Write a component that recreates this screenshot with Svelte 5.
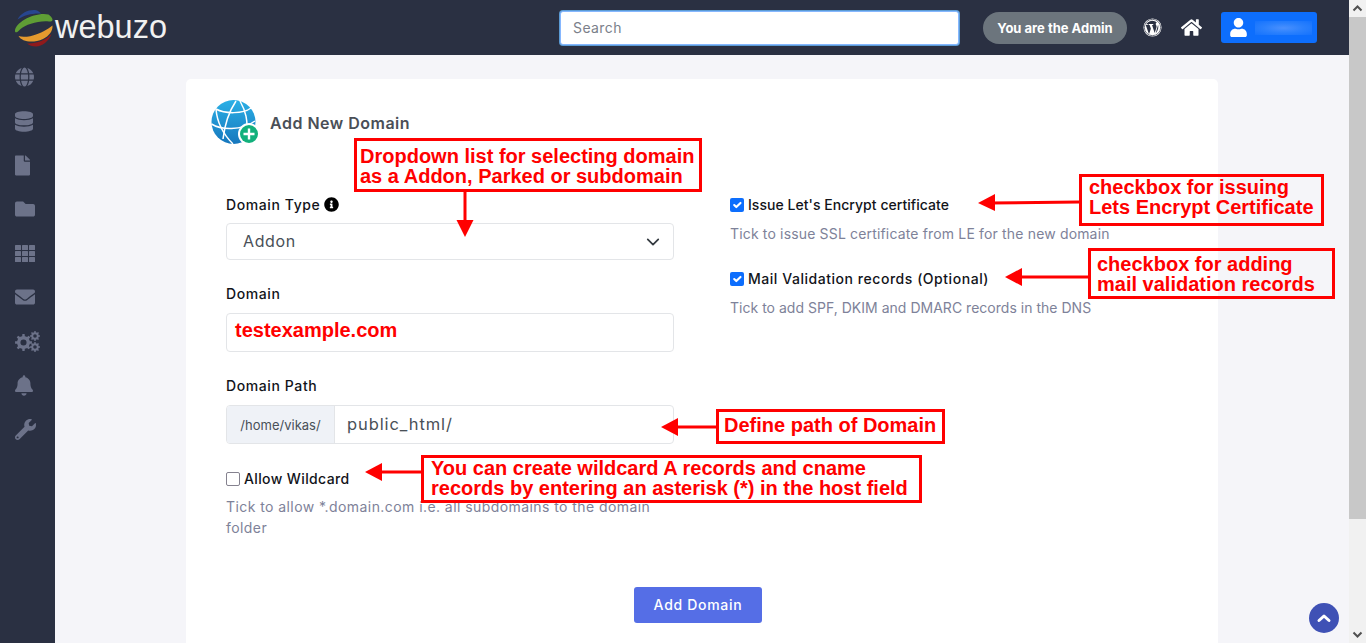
<script>
  // cog outline, used for the three wheels of the settings icon
  function gear(cx, cy, r, teeth) {
    let d = "";
    const step = (Math.PI * 2) / teeth;
    for (let i = 0; i < teeth; i++) {
      const a = i * step;
      const pts = [
        [r * 0.76, a - step * 0.5],
        [r * 0.76, a - step * 0.26],
        [r, a - step * 0.17],
        [r, a + step * 0.17],
        [r * 0.76, a + step * 0.26],
      ];
      for (const [rad, ang] of pts) {
        d += (d ? "L" : "M") + (cx + rad * Math.cos(ang)).toFixed(2) + " " + (cy + rad * Math.sin(ang)).toFixed(2);
      }
    }
    d += "Z";
    const h = r * 0.36;
    d += `M${cx - h} ${cy}a${h} ${h} 0 1 0 ${h * 2} 0a${h} ${h} 0 1 0 ${-h * 2} 0Z`;
    return d;
  }
  const cogs = gear(8.5, 12.5, 8.5, 8) + gear(20, 6, 5, 8) + gear(20, 17, 5, 8);
</script>

<div class="page">
  <div class="viewport">
    <header class="topbar">
      <div class="brand">
        <svg class="logo" viewBox="14 9 40 38" width="40" height="38">
          <path d="M17.500 19.500C21 12.500 29 9.500 35 10C38 10.500 40 12 41 13.500C33 13 24 15 17.500 19.500Z" fill="#27468f" />
          <path d="M15 31C15 22 36 11.500 48.500 14.500C50 15.500 52.500 18 52.500 19.500C52.500 21.500 51 21.500 49 21.500C38 20.500 26 24.500 20 29.500C17 33 15 33 15 31Z" fill="#5f9e35" />
          <path d="M18.500 36C25 38.500 40 35.500 52.500 25.500C53 31 49 36 43 39C33 43.500 22 42 18.500 36Z" fill="#e59a2e" />
          <path d="M27 43.500C36 44 46 40 51.500 34C49 41 42 46.500 36 46.500C32 46.500 29.500 45.500 27 43.500Z" fill="#8f1a1c" />
        </svg>
        <span class="brand-name">webuzo</span>
      </div>
      <input class="search" placeholder="Search" />
      <span class="admin">You are the Admin</span>
      <svg class="wp" viewBox="0 0 20 20" width="19" height="19">
        <circle cx="10" cy="10" r="9.500" fill="#fff" />
        <circle cx="10" cy="10" r="8.600" fill="none" stroke="#2a3042" stroke-width="0.700" />
        <path d="M2.800 7.200L6.300 17L8.300 11.300L7 7.300H6V6.300H10.800V7.300H9.500L12.300 15.700L14 10.600C14.600 8.800 14.100 7.800 13.500 6.800C13.100 6 13.500 5 14.500 4.900C12.900 3.200 9.500 2.300 6.800 3.600C5.300 4.300 4 5.500 3.300 6.300H5V7.300Z" fill="#2a3042" />
        <path d="M15.900 7.200C16.700 9.800 15.800 13.700 13.300 16.200Z" fill="#2a3042" />
      </svg>
      <svg class="home" viewBox="0 0 576 512" width="21" height="19">
        <path d="M280.370 148.260L96 300.110V464a16 16 0 0 0 16 16l112.060-.29a16 16 0 0 0 15.920-16V368a16 16 0 0 1 16-16h64a16 16 0 0 1 16 16v95.640a16 16 0 0 0 16 16.050L464 480a16 16 0 0 0 16-16V300L295.670 148.260a12.190 12.190 0 0 0-15.300 0zM571.600 251.470L488 182.560V44.050a12 12 0 0 0-12-12h-56a12 12 0 0 0-12 12v72.610L318.470 43a48 48 0 0 0-61 0L4.340 251.470a12 12 0 0 0-1.600 16.900l25.500 31A12 12 0 0 0 45.150 301l235.220-193.740a12.190 12.190 0 0 1 15.300 0L530.900 301a12 12 0 0 0 16.900-1.600l25.500-31a12 12 0 0 0-1.700-16.930z" fill="#fff" />
      </svg>
      <div class="user">
        <svg viewBox="0 0 448 512" width="17" height="19">
          <path d="M224 256c70.700 0 128-57.300 128-128S294.700 0 224 0 96 57.300 96 128s57.300 128 128 128zm89.600 32h-16.700c-22.200 10.200-46.900 16-72.900 16s-50.600-5.800-72.900-16h-16.700C60.200 288 0 348.200 0 422.400V464c0 26.500 21.500 48 48 48h352c26.500 0 48-21.500 48-48v-41.600c0-74.200-60.200-134.400-134.400-134.400z" fill="#fff" />
        </svg>
        <span class="user-name"></span>
      </div>
    </header>

    <div class="below">
      <nav class="sidebar">
        <span class="nav-item">
          <svg viewBox="0 0 496 512" width="19" height="20"><path d="M336.500 160C322 70.700 287.800 8 248 8s-74 62.700-88.500 152h177zM152 256c0 22.200 1.200 43.500 3.300 64h185.300c2.100-20.500 3.300-41.800 3.300-64s-1.200-43.500-3.300-64H155.300c-2.100 20.500-3.300 41.800-3.300 64zm324.700-96c-28.600-67.900-86.500-120.400-158-141.600 24.400 33.800 41.200 84.700 50 141.600h108zM177.200 18.400C105.800 39.600 47.800 92.100 19.300 160h108c8.700-56.900 25.500-107.800 49.900-141.600zM487.400 192H372.700c2.100 21 3.300 42.500 3.300 64s-1.200 43-3.300 64h114.600c5.500-20.500 8.600-41.800 8.600-64s-3.100-43.500-8.500-64zM120 256c0-21.500 1.200-43 3.300-64H8.600C3.200 212.500 0 233.800 0 256s3.200 43.500 8.600 64h114.600c-2-21-3.200-42.500-3.200-64zm39.500 96c14.500 89.300 48.700 152 88.500 152s74-62.700 88.500-152h-177zm159.300 141.600c71.400-21.200 129.400-73.700 158-141.600h-108c-8.800 56.900-25.600 107.800-50 141.600zM19.300 352c28.600 67.900 86.500 120.400 158 141.600-24.400-33.800-41.200-84.700-50-141.600h-108z" /></svg>
        </span>
        <span class="nav-item">
          <svg viewBox="0 0 448 512" width="18" height="21"><path d="M448 73.143v45.714C448 159.143 347.667 192 224 192S0 159.143 0 118.857V73.143C0 32.857 100.333 0 224 0s224 32.857 224 73.143zM448 176v102.857C448 319.143 347.667 352 224 352S0 319.143 0 278.857V176c48.125 33.143 136.208 48.572 224 48.572S399.874 209.143 448 176zm0 160v102.857C448 479.143 347.667 512 224 512S0 479.143 0 438.857V336c48.125 33.143 136.208 48.572 224 48.572S399.874 369.143 448 336z" /></svg>
        </span>
        <span class="nav-item">
          <svg viewBox="0 0 384 512" width="15" height="21"><path d="M224 136V0H24C10.700 0 0 10.700 0 24v464c0 13.300 10.700 24 24 24h336c13.300 0 24-10.700 24-24V160H248c-13.200 0-24-10.800-24-24zm160-14.100v6.100H256V0h6.100c6.400 0 12.500 2.500 17 7l97.900 98c4.500 4.500 7 10.600 7 16.900z" /></svg>
        </span>
        <span class="nav-item">
          <svg viewBox="0 0 512 512" width="20" height="20"><path d="M464 128H272l-64-64H48C21.490 64 0 85.490 0 112v288c0 26.510 21.490 48 48 48h416c26.510 0 48-21.490 48-48V176c0-26.510-21.490-48-48-48z" /></svg>
        </span>
        <span class="nav-item">
          <svg viewBox="0 0 20 17" width="20" height="17">
            <rect x="0" y="0" width="6" height="5" rx="0.500" /><rect x="7" y="0" width="6" height="5" rx="0.500" /><rect x="14" y="0" width="6" height="5" rx="0.500" />
            <rect x="0" y="6" width="6" height="5" rx="0.500" /><rect x="7" y="6" width="6" height="5" rx="0.500" /><rect x="14" y="6" width="6" height="5" rx="0.500" />
            <rect x="0" y="12" width="6" height="5" rx="0.500" /><rect x="7" y="12" width="6" height="5" rx="0.500" /><rect x="14" y="12" width="6" height="5" rx="0.500" />
          </svg>
        </span>
        <span class="nav-item">
          <svg viewBox="0 0 512 512" width="20" height="20"><path d="M502.300 190.800c3.900-3.100 9.700-.2 9.700 4.700V400c0 26.500-21.500 48-48 48H48c-26.500 0-48-21.500-48-48V195.600c0-5 5.700-7.800 9.700-4.700 22.400 17.400 52.100 39.500 154.100 113.600 21.100 15.400 56.700 47.800 92.200 47.600 35.700.3 72-32.800 92.300-47.600 102-74.100 131.600-96.300 154-113.700zM256 320c23.200.4 56.600-29.200 73.400-41.400 132.700-96.300 142.800-104.700 173.400-128.700 5.800-4.500 9.200-11.500 9.200-18.900v-19c0-26.500-21.500-48-48-48H48C21.500 64 0 85.500 0 112v19c0 7.400 3.400 14.300 9.200 18.900 30.600 23.900 40.700 32.400 173.400 128.700 16.800 12.200 50.200 41.800 73.400 41.400z" /></svg>
        </span>
        <span class="nav-item">
          <svg viewBox="0 0 25 22" width="25" height="22"><path fill-rule="evenodd" d={cogs} /></svg>
        </span>
        <span class="nav-item">
          <svg viewBox="0 0 448 512" width="18" height="21"><path d="M224 512c35.320 0 63.970-28.650 63.970-64H160.030c0 35.350 28.650 64 63.970 64zm215.390-149.710c-19.320-20.760-55.470-51.990-55.470-154.290 0-77.700-54.480-139.900-127.940-155.160V32c0-17.670-14.320-32-31.980-32s-31.980 14.330-31.980 32v20.840C118.560 68.100 64.080 130.300 64.080 208c0 102.300-36.150 133.530-55.470 154.290-6 6.450-8.660 14.160-8.610 21.710.11 16.400 12.980 32 32.100 32h383.800c19.120 0 32-15.600 32.100-32 .05-7.550-2.610-15.270-8.610-21.710z" /></svg>
        </span>
        <span class="nav-item">
          <svg viewBox="0 0 512 512" width="21" height="21"><path d="M507.730 109.100c-2.240-9.030-13.540-12.090-20.120-5.510l-74.360 74.360-67.880-11.310-11.310-67.880 74.360-74.360c6.620-6.620 3.430-17.900-5.660-20.160-47.380-11.740-99.550.91-136.580 37.930-39.640 39.640-50.550 97.100-34.050 147.200L18.740 402.760c-24.990 24.990-24.990 65.510 0 90.500 24.990 24.990 65.510 24.990 90.500 0l213.210-213.210c50.120 16.710 107.470 5.680 147.370-34.220 37.070-37.070 49.700-89.320 37.910-136.730zM64 472c-13.250 0-24-10.750-24-24 0-13.260 10.750-24 24-24s24 10.740 24 24c0 13.250-10.750 24-24 24z" /></svg>
        </span>
      </nav>

      <main class="main">
        <section class="card">
          <div class="card-head">
            <svg viewBox="0 0 48 46" width="48" height="46">
              <defs>
                <linearGradient id="ball" x1="0" y1="0" x2="0" y2="1">
                  <stop offset="0" stop-color="#2bb0e6" />
                  <stop offset="1" stop-color="#1677bd" />
                </linearGradient>
              </defs>
              <circle cx="22.500" cy="22" r="22" fill="url(#ball)" />
              <g fill="none" stroke="#fff" stroke-width="1.500">
                <path d="M5 9C14 14 32 14 40 8" />
                <path d="M0.500 24C10 30 30 31 44 21" />
                <path d="M5 9C6 22 12 34 22 44" />
                <path d="M25 1C19 10 14 22 12 39" />
                <path d="M29 1C34 10 38 20 35 38" />
              </g>
              <circle cx="38" cy="34" r="11" fill="#fff" />
              <circle cx="38" cy="34" r="9" fill="#12b07c" />
              <path d="M38 28.500V39.500M32.500 34H43.500" stroke="#fff" stroke-width="2.400" />
            </svg>
            <h2>Add New Domain</h2>
          </div>

          <div class="columns">
            <div class="col">
              <div class="field first">
                <div class="label">
                  Domain Type
                  <svg viewBox="0 0 512 512" width="15" height="15"><path d="M256 8C119.043 8 8 119.083 8 256c0 136.997 111.043 248 248 248s248-111.003 248-248C504 119.083 392.957 8 256 8zm0 110c23.196 0 42 18.804 42 42s-18.804 42-42 42-42-18.804-42-42 18.804-42 42-42zm56 254c0 6.627-5.373 12-12 12h-88c-6.627 0-12-5.373-12-12v-24c0-6.627 5.373-12 12-12h12v-64h-12c-6.627 0-12-5.373-12-12v-24c0-6.627 5.373-12 12-12h64c6.627 0 12 5.373 12 12v100h12c6.627 0 12 5.373 12 12v24z" /></svg>
                </div>
                <div class="control select">
                  <span>Addon</span>
                  <svg viewBox="0 0 16 16" width="14" height="14"><path d="M2 5l6 6 6-6" fill="none" stroke="#343a40" stroke-width="2" stroke-linecap="round" stroke-linejoin="round" /></svg>
                </div>
              </div>
              <div class="field">
                <div class="label lifted">Domain</div>
                <div class="control typed">testexample.com</div>
              </div>
              <div class="field">
                <div class="label lifted">Domain Path</div>
                <div class="group">
                  <span class="addon">/home/vikas/</span>
                  <span class="path">public_html/</span>
                </div>
              </div>
              <div class="check-row wild">
                <span class="box"></span>
                Allow Wildcard
              </div>
              <p class="help help-wild">Tick to allow *.domain.com i.e. all subdomains to the domain folder</p>
            </div>

            <div class="col right">
              <div class="check-row issue">
                <span class="box on">
                  <svg viewBox="0 0 20 20" width="14" height="14"><path d="M6 10l3 3 6-6" fill="none" stroke="#fff" stroke-width="3" stroke-linecap="round" stroke-linejoin="round" /></svg>
                </span>
                Issue Let's Encrypt certificate
              </div>
              <p class="help help-ssl">Tick to issue SSL certificate from LE for the new domain</p>
              <div class="check-row second">
                <span class="box on">
                  <svg viewBox="0 0 20 20" width="14" height="14"><path d="M6 10l3 3 6-6" fill="none" stroke="#fff" stroke-width="3" stroke-linecap="round" stroke-linejoin="round" /></svg>
                </span>
                Mail Validation records (Optional)
              </div>
              <p class="help help-dns">Tick to add SPF, DKIM and DMARC records in the DNS</p>
            </div>
          </div>

          <div class="actions">
            <button class="submit">Add Domain</button>
          </div>
        </section>
      </main>
    </div>
  </div>

  <div class="scrollbar">
    <svg viewBox="0 0 17 17" width="17" height="17"><path d="M4.500 10.500L8.500 6.500L12.500 10.500" fill="none" stroke="#505050" stroke-width="2" /></svg>
    <div class="thumb"></div>
    <div class="track"></div>
    <svg viewBox="0 0 17 17" width="17" height="17"><path d="M4.500 6.500L8.500 10.500L12.500 6.500" fill="none" stroke="#505050" stroke-width="2" /></svg>
  </div>

  <button class="to-top" aria-label="Back to top">
    <svg viewBox="0 0 16 16" width="16" height="16"><path d="M3 10.500L8 6L13 10.500" fill="none" stroke="#fff" stroke-width="3" stroke-linecap="round" stroke-linejoin="round" /></svg>
  </button>

  <!-- red callouts drawn on top of the screenshot -->
  <svg class="arrows" viewBox="0 0 1366 643" width="1366" height="643">
    <g stroke="#ff0000" stroke-width="3">
      <path d="M465 192V224" />
      <path d="M1079 202L990 203" />
      <path d="M1088 277L1018 277" />
      <path d="M716 427L675 427" />
      <path d="M421 472L378 472" />
    </g>
    <g fill="#ff0000">
      <polygon points="456.500,220 473.500,220 465,237" />
      <polygon points="995,194 995,211 978,203" />
      <polygon points="1022,268 1022,286 1005,277" />
      <polygon points="678,418 678,436 661,427" />
      <polygon points="382,463 382,481 365,472" />
    </g>
  </svg>
  <div class="note note-type">Dropdown list for selecting domain<br />as a Addon, Parked or subdomain</div>
  <div class="note note-ssl">checkbox for issuing<br />Lets Encrypt Certificate</div>
  <div class="note note-mail">checkbox for adding<br />mail validation records</div>
  <div class="note note-path">Define path of Domain</div>
  <div class="note note-wild">You can create wildcard A records and cname<br />records by entering an asterisk (*) in the host field</div>
</div>

<style>
  :global(body) {
    overflow: hidden;
    font-family: Inter, "Open Sans", sans-serif;
  }
  .page {
    position: relative;
    display: flex;
    height: 643px;
    overflow: hidden;
    font-family: Inter, "Open Sans", sans-serif;
  }
  .viewport {
    flex: 1;
    min-width: 0;
    display: flex;
    flex-direction: column;
  }
  .topbar {
    height: 55px;
    flex: none;
    display: flex;
    align-items: center;
    background: #2a3042;
  }
  .brand {
    width: 559px;
    flex: none;
    display: flex;
    align-items: center;
    padding-left: 14px;
    box-sizing: border-box;
  }
  .logo {
    flex: none;
    margin-right: 1px;
  }
  .brand-name {
    font-family: "Liberation Sans", sans-serif;
    font-size: 32.500px;
    line-height: 38px;
    color: #f1f1f1;
    margin-top: -2px;
  }
  .search {
    width: 399px;
    height: 34px;
    flex: none;
    box-sizing: border-box;
    margin-left: 1px;
    padding: 0 12px;
    border: 1px solid #86b7fe;
    border-radius: 3px;
    box-shadow: 0 0 0 1px #5b9bd5;
    outline: none;
    background: #fff;
    font: 14px Inter, sans-serif;
    letter-spacing: 0.4px;
  }
  .search::placeholder {
    color: #7b7f8a;
    opacity: 1;
  }
  .admin {
    margin-left: 24px;
    width: 144px;
    height: 32px;
    flex: none;
    box-sizing: border-box;
    display: flex;
    align-items: center;
    justify-content: center;
    border-radius: 16px;
    background: #6c757d;
    color: #fff;
    font-size: 13px;
    font-weight: 700;
    white-space: nowrap;
  }
  .wp {
    margin-left: 16px;
    flex: none;
  }
  .home {
    margin-left: 19px;
    flex: none;
  }
  .user {
    margin-left: 19px;
    width: 96px;
    height: 31px;
    flex: none;
    display: flex;
    align-items: center;
    box-sizing: border-box;
    padding-left: 9px;
    border-radius: 3px;
    background: #0d6efd;
  }
  .user-name {
    width: 57px;
    height: 14px;
    margin-left: 8px;
    background: radial-gradient(ellipse at 50% 50%, #4a90fe 0%, #2a80fd 50%, #1472fd 100%);
  }
  .below {
    flex: 1;
    min-height: 0;
    display: flex;
  }
  .sidebar {
    width: 55px;
    flex: none;
    display: flex;
    flex-direction: column;
    background: #2a3042;
    padding-left: 15px;
    box-sizing: border-box;
  }
  .nav-item {
    height: 44px;
    display: flex;
    align-items: center;
  }
  .nav-item svg {
    fill: #6c7289;
  }
  .main {
    flex: 1;
    min-width: 0;
    padding: 24px 131px 0;
    background: #f5f5f9;
    overflow: hidden;
  }
  .card {
    height: 620px;
    box-sizing: border-box;
    padding: 21px 40px 0;
    background: #fff;
    border-radius: 5px;
  }
  .card-head {
    display: flex;
    align-items: center;
    gap: 11px;
    margin-left: -15px;
  }
  h2 {
    margin: 0;
    font-size: 16px;
    font-weight: 600;
    line-height: 46px;
    letter-spacing: 0.5px;
    color: #4a4f57;
  }
  .columns {
    display: flex;
    gap: 56px;
  }
  .col {
    width: 448px;
    flex: none;
  }
  .field {
    margin-bottom: 24px;
  }
  .field.first {
    margin-top: 48px;
  }
  .label {
    display: flex;
    align-items: center;
    gap: 4px;
    height: 21px;
    box-sizing: border-box;
    margin-bottom: 8px;
    font-size: 14px;
    font-weight: 500;
    letter-spacing: 0.6px;
    color: #12141a;
  }
  .label.lifted {
    padding-bottom: 2px;
  }
  .control {
    height: 39px;
    box-sizing: border-box;
    display: flex;
    align-items: center;
    border: 1px solid #e3e5e8;
    border-radius: 4px;
    background: #fff;
  }
  .select {
    height: 37px;
    justify-content: space-between;
    padding: 0 13px 0 16px;
    font-size: 16px;
    letter-spacing: 0.6px;
    color: #495057;
  }
  .select span {
    margin-top: -2px;
  }
  .typed {
    padding: 0 0 4px 8px;
    font-family: "Liberation Sans", sans-serif;
    font-size: 20px;
    font-weight: 700;
    color: #f00;
  }
  .group {
    height: 39px;
    box-sizing: border-box;
    display: flex;
    border: 1px solid #e3e5e8;
    border-radius: 4px;
    overflow: hidden;
  }
  .addon {
    width: 107px;
    flex: none;
    display: flex;
    align-items: center;
    justify-content: center;
    background: #eff2f7;
    border-right: 1px solid #e3e5e8;
    font-size: 13px;
    color: #495057;
  }
  .path {
    display: flex;
    align-items: center;
    padding: 0 0 2px 12px;
    font-size: 16.500px;
    letter-spacing: 0.9px;
    color: #495057;
  }
  .check-row {
    display: flex;
    align-items: center;
    gap: 4px;
    height: 21px;
    font-size: 14px;
    font-weight: 500;
    letter-spacing: 0.54px;
    color: #12141a;
  }
  .check-row.issue {
    letter-spacing: 0.04px;
  }
  .wild {
    letter-spacing: 0.38px;
  }
  .box {
    width: 14px;
    height: 14px;
    box-sizing: border-box;
    flex: none;
    display: flex;
    border: 1.500px solid #85828f;
    border-radius: 2px;
    background: #fff;
  }
  .box.on {
    border: none;
    background: #0d6efd;
  }
  .help {
    margin: 8px 0 0;
    font-size: 14px;
    line-height: 21px;
    color: #7e8299;
  }
  .help-wild {
    margin-top: 7px;
    letter-spacing: 0.43px;
  }
  .help-ssl {
    letter-spacing: 0.16px;
  }
  .help-dns {
    letter-spacing: 0.02px;
  }
  .right {
    padding-top: 48px;
  }
  .second {
    margin-top: 24px;
  }
  .actions {
    display: flex;
    justify-content: center;
    margin-top: 49px;
    padding-right: 8px;
  }
  .submit {
    width: 128px;
    height: 36px;
    padding: 0 0 2px;
    border: none;
    border-radius: 3px;
    background: #556ee6;
    color: #fff;
    font: 500 14px Inter, sans-serif;
    letter-spacing: 0.7px;
  }
  .scrollbar {
    width: 17px;
    flex: none;
    display: flex;
    flex-direction: column;
    background: #f1f1f1;
  }
  .scrollbar svg {
    flex: none;
  }
  .thumb {
    height: 502px;
    flex: none;
    background: #c8c8c8;
  }
  .track {
    flex: 1;
  }
  .to-top {
    position: absolute;
    left: 1309px;
    top: 603px;
    width: 30px;
    height: 30px;
    padding: 0;
    display: flex;
    align-items: center;
    justify-content: center;
    border: none;
    border-radius: 50%;
    background: #3f51b5;
  }
  .arrows {
    position: absolute;
    left: 0;
    top: 0;
    pointer-events: none;
  }
  .note {
    position: absolute;
    box-sizing: border-box;
    border: 3px solid #f00;
    font-family: "Liberation Sans", sans-serif;
    font-size: 20px;
    font-weight: 700;
    line-height: 20px;
    color: #f00;
    white-space: nowrap;
  }
  .note-type {
    left: 354px;
    top: 138px;
    width: 348px;
    height: 54px;
    padding: 5px 0 0 3px;
  }
  .note-ssl {
    left: 1079px;
    top: 174px;
    width: 245px;
    height: 52px;
    padding: 0 0 0 7px;
  }
  .note-mail {
    left: 1088px;
    top: 248px;
    width: 247px;
    height: 51px;
    padding: 3px 0 0 6px;
  }
  .note-path {
    left: 716px;
    top: 409px;
    width: 229px;
    height: 35px;
    padding: 3px 0 0 5px;
  }
  .note-wild {
    left: 421px;
    top: 455px;
    width: 501px;
    height: 48px;
    padding: 0 0 0 7px;
  }
</style>
